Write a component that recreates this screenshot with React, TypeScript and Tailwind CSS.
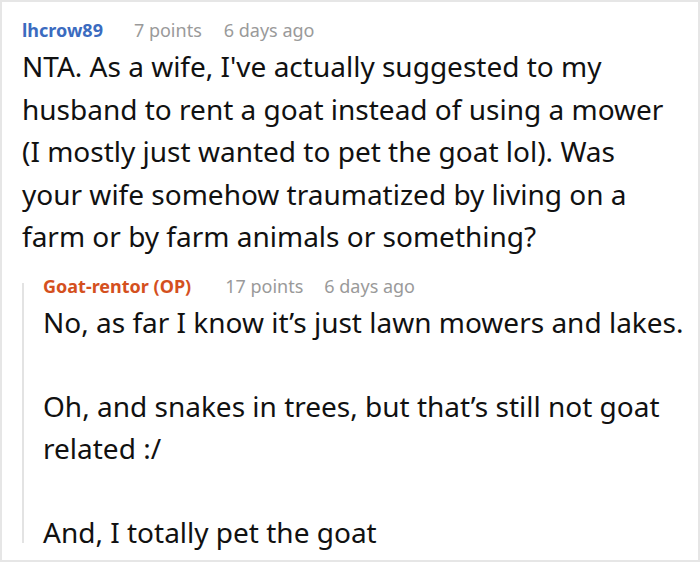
import React from "react";

export default function App() {
  return (
    <div
      className="w-[700px] h-[562px] border-2 border-[#e6e6e6] bg-white overflow-hidden pl-[20px] pt-[16px]"
      style={{ fontFamily: '"Noto Sans", "Open Sans", sans-serif' }}
    >
      <div className="flex items-baseline text-[18px] leading-[24px]">
        <span className="font-bold text-[#3b6bbf] mr-[31px]">lhcrow89</span>
        <span className="text-[#9a9a9a] mr-[22px]">7 points</span>
        <span className="text-[#9a9a9a]">6 days ago</span>
      </div>
      <div className="mt-[3px] text-[28px] leading-[42.5px] text-[#111]">
        NTA. As a wife, I've actually suggested to my
        <br />
        husband to rent a goat instead of using a mower
        <br />
        (I mostly just wanted to pet the goat lol). Was
        <br />
        your wife somehow traumatized by living on a
        <br />
        farm or by farm animals or something?
      </div>
      <div className="flex mt-[16px]">
        <div className="w-[2px] mt-[9px] mb-[10px] bg-[#e3e3e3] shrink-0" />
        <div className="pl-[19px]">
          <div className="flex items-baseline text-[18px] leading-[24px]">
            <span className="font-bold text-[#d4501e] mr-[34px]">Goat-rentor (OP)</span>
            <span className="text-[#9a9a9a] mr-[21px]">17 points</span>
            <span className="text-[#9a9a9a]">6 days ago</span>
          </div>
          <div className="mt-[3px] text-[28px] leading-[42px] text-[#111]">
            <p>No, as far I know it’s just lawn mowers and lakes.</p>
            <p className="mt-[42px]">Oh, and snakes in trees, but that’s still not goat</p>
            <p>related :/</p>
            <p className="mt-[42px]">And, I totally pet the goat</p>
          </div>
        </div>
      </div>
    </div>
  );
}
